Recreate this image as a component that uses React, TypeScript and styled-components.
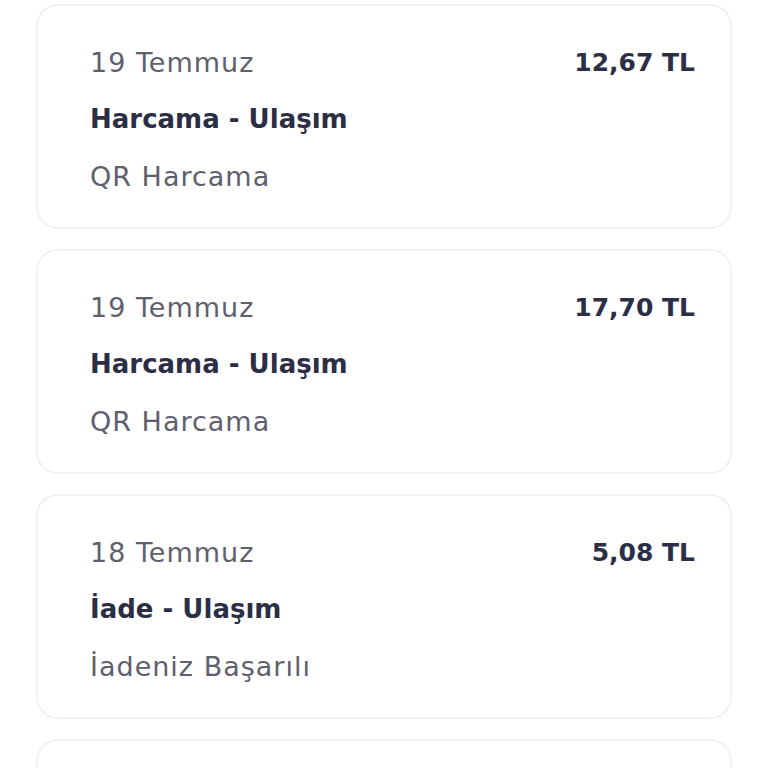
import { FC } from "react"
import styled, { createGlobalStyle } from "styled-components"

const GlobalStyle = createGlobalStyle`
  body {
    margin: 0;
    background: #ffffff;
    font-family: "DejaVu Sans", "Noto Sans", sans-serif;
  }
`

const List = styled.div`
  display: flex;
  flex-direction: column;
  gap: 20px;
  padding: 4px 36px 0;
`

const Card = styled.div`
  flex: 0 0 auto;
  display: flex;
  justify-content: space-between;
  align-items: flex-start;
  height: 225px;
  box-sizing: border-box;
  padding: 28px 35px 0 52px;
  border: 2.5px solid #f1f1f4;
  border-radius: 22px;
  background: #ffffff;
`

const Info = styled.div`
  display: flex;
  flex-direction: column;
`

const Line = styled.div<{ $bold?: boolean }>`
  font-size: ${(p) => (p.$bold ? "26px" : "27px")};
  line-height: 57px;
  font-weight: ${(p) => (p.$bold ? 700 : 400)};
  letter-spacing: ${(p) => (p.$bold ? "0" : "1px")};
  color: ${(p) => (p.$bold ? "#2c2e45" : "#5e606d")};
  white-space: nowrap;
`

const Amount = styled.div`
  font-size: 25px;
  line-height: 57px;
  font-weight: 700;
  color: #2c2e45;
  white-space: nowrap;
`

type Transaction = {
  date: string
  title: string
  detail: string
  amount: string
}

const transactions: Transaction[] = [
  { date: "19 Temmuz", title: "Harcama - Ulaşım", detail: "QR Harcama", amount: "12,67 TL" },
  { date: "19 Temmuz", title: "Harcama - Ulaşım", detail: "QR Harcama", amount: "17,70 TL" },
  { date: "18 Temmuz", title: "İade - Ulaşım", detail: "İadeniz Başarılı", amount: "5,08 TL" },
  { date: "18 Temmuz", title: "Harcama - Ulaşım", detail: "QR Harcama", amount: "5,08 TL" },
]

const TransactionCard: FC<{ item: Transaction }> = ({ item }) => (
  <Card>
    <Info>
      <Line>{item.date}</Line>
      <Line $bold>{item.title}</Line>
      <Line>{item.detail}</Line>
    </Info>
    <Amount>{item.amount}</Amount>
  </Card>
)

const App: FC = () => (
  <>
    <GlobalStyle />
    <List>
      {transactions.map((t, i) => (
        <TransactionCard key={i} item={t} />
      ))}
    </List>
  </>
)

export default App
